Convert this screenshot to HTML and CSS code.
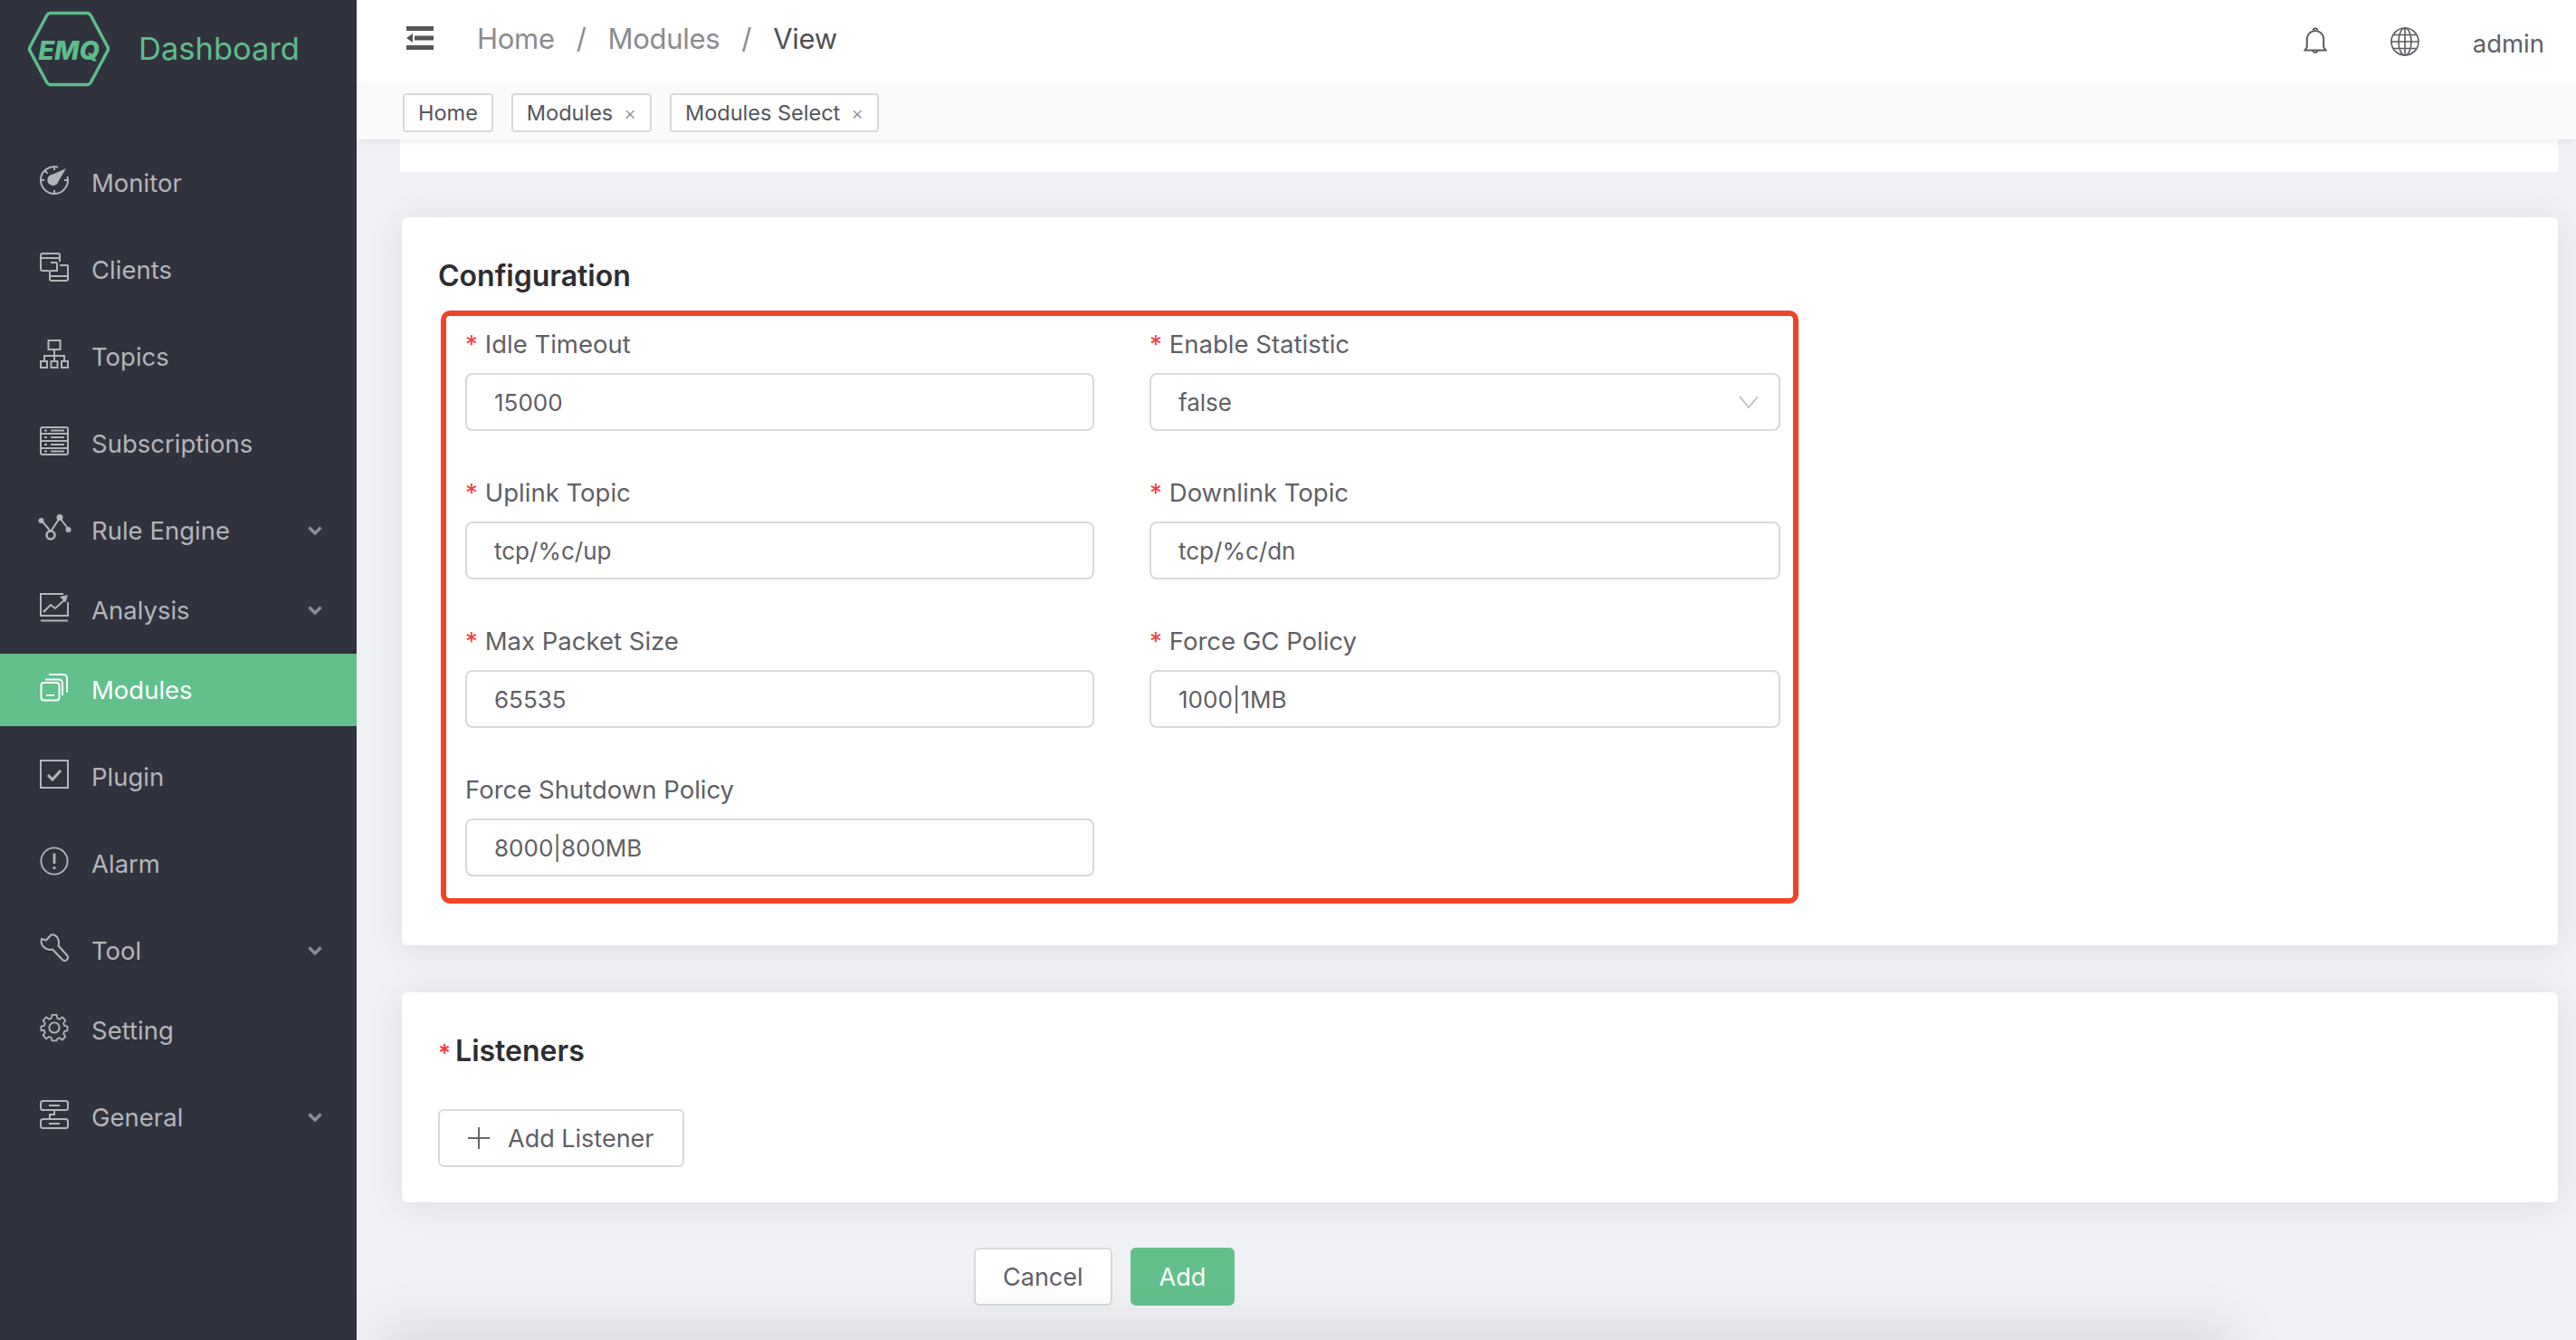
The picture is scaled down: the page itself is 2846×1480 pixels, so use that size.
FILE: index.html
```html
<!DOCTYPE html>
<html lang="en">
<head>
  <meta charset="UTF-8">
  <title>EMQ Dashboard</title>
  <link rel="stylesheet" href="styles.css">
</head>
<body>
  <div class="layout">
    <aside class="sidebar">
      <div class="logo">
        <svg class="logo-mark" viewBox="0 0 92 84">
          <path d="M26 2.500h40a5 5 0 0 1 4.300 2.500l18.400 34.500a5 5 0 0 1 0 5L70.300 79a5 5 0 0 1-4.300 2.500H26a5 5 0 0 1-4.300-2.500L3.300 44.500a5 5 0 0 1 0-5L21.700 5A5 5 0 0 1 26 2.500z" fill="none" stroke="currentColor" stroke-width="3.500"/>
          <text x="46" y="54" text-anchor="middle" class="logo-text">EMQ</text>
        </svg>
        <span class="logo-title">Dashboard</span>
      </div>
      <nav class="menu">
        <a class="menu-item">
          <svg class="menu-icon" viewBox="0 0 32 32"><path d="M20 1.600A15 15 0 1 0 30.400 12"/><path d="M16 1v4M1 16h4M27 16h4M16 27v4M5.500 5.500l3 3"/><path class="solid" d="M29 3l-8.500 14.500a6.200 6.200 0 1 1-6-8z"/></svg>
          <span>Monitor</span>
        </a>
        <a class="menu-item">
          <svg class="menu-icon" viewBox="0 0 32 32"><path d="M10 20H3a2 2 0 0 1-2-2V3a2 2 0 0 1 2-2h17a2 2 0 0 1 2 2v7"/><path d="M1 6h21"/><path d="M12 11h6a1 1 0 0 1 1 1v8h-8"/><path d="M22 14h8a1 1 0 0 1 1 1v14a2 2 0 0 1-2 2H13a2 2 0 0 1-2-2v-9"/><path d="M12 26h19"/></svg>
          <span>Clients</span>
        </a>
        <a class="menu-item">
          <svg class="menu-icon" viewBox="0 0 32 32"><rect x="9.500" y="1" width="13" height="10"/><path d="M16 11v7M5 24v-6h22v6M16 18v6"/><rect x="1" y="24" width="7" height="7"/><rect x="12.500" y="24" width="7" height="7"/><rect x="24" y="24" width="7" height="7"/></svg>
          <span>Topics</span>
        </a>
        <a class="menu-item">
          <svg class="menu-icon" viewBox="0 0 32 32"><rect x="1" y="1" width="30" height="30" rx="2"/><path d="M1 8h30M1 16h30M1 24h30"/><path d="M5 4.500h3M12 4.500h15M5 12h3M12 12h15M5 20h3M12 20h15M5 27.500h3M12 27.500h15"/></svg>
          <span>Subscriptions</span>
        </a>
        <a class="menu-item item-tight">
          <svg class="menu-icon icon-wide" viewBox="0 0 36 32"><path d="M4 8l10 12 10-15 10 13"/><circle class="solid" cx="3.500" cy="8" r="3"/><circle class="solid" cx="24" cy="4.500" r="3.500"/><circle class="solid" cx="33.500" cy="18" r="3"/><circle class="hollow" cx="14" cy="24" r="4.500"/></svg>
          <span>Rule Engine</span>
          <svg class="chevron" viewBox="0 0 16 10"><path d="M1.500 1.500L8 8l6.500-6.500"/></svg>
        </a>
        <a class="menu-item item-tight">
          <svg class="menu-icon" viewBox="0 0 32 32"><path d="M26 1H1v24h30V10"/><path d="M1 30.500h30"/><path d="M5 20l7-7 5 4 12-11"/><path class="solid" d="M31 2l-9 2 6.500 6.500z"/><circle class="solid" cx="5" cy="20" r="1.500"/></svg>
          <span>Analysis</span>
          <svg class="chevron" viewBox="0 0 16 10"><path d="M1.500 1.500L8 8l6.500-6.500"/></svg>
        </a>
        <a class="menu-item active">
          <svg class="menu-icon" viewBox="0 0 32 32"><rect x="1.500" y="11" width="20" height="19.500" rx="3"/><path d="M7 25h9"/><path d="M6 7.500h15a4 4 0 0 1 4 4V25"/><path d="M10 2h16a4 4 0 0 1 4 4v15.500"/></svg>
          <span>Modules</span>
        </a>
        <a class="menu-item">
          <svg class="menu-icon" viewBox="0 0 32 32"><rect x="1" y="1" width="30" height="30"/><path class="thick" d="M9 17l5 5 9-10"/></svg>
          <span>Plugin</span>
        </a>
        <a class="menu-item">
          <svg class="menu-icon" viewBox="0 0 34 34"><circle cx="17" cy="17" r="15.500"/><path class="thick" d="M17 8v12"/><circle class="solid" cx="17" cy="25" r="1.700"/></svg>
          <span>Alarm</span>
        </a>
        <a class="menu-item item-tight">
          <svg class="menu-icon" viewBox="0 0 32 32"><path d="M12.500 1.500L7 7.500 2 6C0 13 7 20 14 17.500L25 29a3.500 3.500 0 0 0 5-5L20.500 13.500C22.500 7 18 0 12.500 1.500z" stroke-linejoin="round"/></svg>
          <span>Tool</span>
          <svg class="chevron" viewBox="0 0 16 10"><path d="M1.500 1.500L8 8l6.500-6.500"/></svg>
        </a>
        <a class="menu-item">
          <svg class="menu-icon" viewBox="0 0 34 34"><path d="M14 2h6l.8 4.300 2.900 1.200 3.700-2.500 4 4-2.500 3.700 1.200 2.900L34 16.400v5.200l-3.900.8-1.200 2.900 2.500 3.700-4 4-3.700-2.500-2.900 1.200L20 34h-6l-.8-3.700-2.900-1.200-3.700 2.500-4-4 2.500-3.700-1.200-2.900L0 21.600v-5.200l3.900-.8 1.200-2.900L2.600 9l4-4 3.700 2.500 2.900-1.200z" transform="translate(1.500 0) scale(.91 .95)"/><circle cx="17" cy="17" r="6"/></svg>
          <span>Setting</span>
        </a>
        <a class="menu-item item-tight">
          <svg class="menu-icon" viewBox="0 0 32 32"><rect x="1" y="1" width="30" height="10" rx="2.500"/><rect x="1" y="21" width="30" height="10" rx="2.500"/><path d="M16 11v5h-5v5M10 6h12M10 26h12"/></svg>
          <span>General</span>
          <svg class="chevron" viewBox="0 0 16 10"><path d="M1.500 1.500L8 8l6.500-6.500"/></svg>
        </a>
      </nav>
    </aside>

    <div class="main">
      <header class="topbar">
        <svg class="fold-icon" viewBox="0 0 30 26"><path d="M0 0h30v5H0zM0 21h30v5H0zM9 10.500h21v5H9zM7 8v10l-7-5z"/></svg>
        <div class="breadcrumb">
          <span>Home</span><i>/</i><span>Modules</span><i>/</i><span class="current">View</span>
        </div>
        <div class="topbar-right">
          <svg class="bell" viewBox="0 0 26 32"><path d="M1.500 26.500l2.300-3.500V13a9.300 9.300 0 0 1 18.400 0v10l2.300 3.500z"/><path d="M10.500 4.200a2.600 2.600 0 0 1 5 0M10.200 27a3 3 0 0 0 5.600 0"/></svg>
          <svg class="globe" viewBox="0 0 32 32"><circle cx="16" cy="16" r="15"/><ellipse cx="16" cy="16" rx="7" ry="15"/><path d="M16 1v30M1 16h30M3.500 8.500h25M3.500 23.500h25"/></svg>
          <span class="user">admin</span>
        </div>
      </header>
      <div class="tags">
        <span class="tag">Home</span>
        <span class="tag">Modules<b>×</b></span>
        <span class="tag">Modules Select<b>×</b></span>
      </div>

      <div class="content">
        <div class="card card-cut"></div>

        <section class="card card-config">
          <h2>Configuration</h2>
          <form class="config-form">
            <div class="field">
              <label class="required">Idle Timeout</label>
              <input type="text" value="15000">
            </div>
            <div class="field">
              <label class="required">Enable Statistic</label>
              <div class="select">
                <input type="text" value="false">
                <svg viewBox="0 0 22 14"><path d="M1 1l10 12L21 1"/></svg>
              </div>
            </div>
            <div class="field">
              <label class="required">Uplink Topic</label>
              <input type="text" value="tcp/%c/up">
            </div>
            <div class="field">
              <label class="required">Downlink Topic</label>
              <input type="text" value="tcp/%c/dn">
            </div>
            <div class="field">
              <label class="required">Max Packet Size</label>
              <input type="text" value="65535">
            </div>
            <div class="field">
              <label class="required">Force GC Policy</label>
              <input type="text" value="1000|1MB">
            </div>
            <div class="field">
              <label>Force Shutdown Policy</label>
              <input type="text" value="8000|800MB">
            </div>
          </form>
        </section>

        <section class="card card-listeners">
          <h2 class="required">Listeners</h2>
          <button class="btn btn-add" type="button">
            <svg viewBox="0 0 24 24"><path d="M12 0v24M0 12h24"/></svg>
            Add Listener
          </button>
        </section>

        <div class="actions">
          <button class="btn" type="button">Cancel</button>
          <button class="btn btn-primary" type="button">Add</button>
        </div>
      </div>
    </div>
  </div>
</body>
</html>
```

FILE: styles.css
```css
* {
  margin: 0;
  padding: 0;
  box-sizing: border-box;
}

body {
  font-family: Inter, "Noto Sans", sans-serif;
  background: #eff1f5;
  color: #5f6066;
  height: 1480px;
  overflow: hidden;
}

.layout {
  display: flex;
  height: 1480px;
}

/* sidebar */
.sidebar {
  width: 394px;
  flex-shrink: 0;
  background: #30323e;
  color: #b4b5ba;
}

.logo {
  display: flex;
  align-items: center;
  height: 108px;
  padding-left: 30px;
  color: #5dbd8a;
}

.logo-mark {
  width: 92px;
  height: 84px;
}

.logo-text {
  font-family: Inter, sans-serif;
  font-size: 29px;
  font-weight: 800;
  font-style: italic;
  fill: currentColor;
}

.logo-title {
  margin: -2px 0 0 31px;
  font-size: 34.5px;
}

.menu {
  padding-top: 54px;
}

.menu-item {
  display: flex;
  align-items: center;
  height: 80px;
  margin-bottom: 16px;
  padding: 0 38px 0 44px;
  font-size: 27.5px;
}

.menu-item.item-tight {
  margin-bottom: 8px;
}

.menu-item.active {
  background: #61c08c;
  color: #fff;
}

.menu-item span {
  flex: 1;
}

.menu-icon {
  width: 32px;
  height: 32px;
  margin-right: 25px;
  margin-top: -6px;
  overflow: visible;
  fill: none;
  stroke: currentColor;
  stroke-width: 2;
}

.icon-wide {
  width: 36px;
  margin-left: -2px;
  margin-right: 23px;
}

.menu-icon .solid {
  fill: currentColor;
  stroke: none;
}

.menu-icon .hollow {
  fill: #30323e;
  stroke-width: 2.500;
}

.menu-icon .thick {
  stroke-width: 3;
}

.chevron {
  width: 16px;
  height: 10px;
  fill: none;
  stroke: #8b8c93;
  stroke-width: 3.500;
}

/* top */
.main {
  flex: 1;
  min-width: 0;
  display: flex;
  flex-direction: column;
  position: relative;
  overflow: hidden;
}

/* shadow of the footer sitting just below the window */
.main::after {
  content: '';
  position: absolute;
  left: 40px;
  bottom: -20px;
  width: 2020px;
  height: 20px;
  box-shadow: 0 0 60px 14px rgba(0, 0, 0, 0.1);
  pointer-events: none;
}

.topbar {
  display: flex;
  align-items: center;
  height: 92px;
  flex-shrink: 0;
  padding: 0 35px 8px 55px;
  background: #fff;
}

.fold-icon {
  width: 30px;
  height: 26px;
  fill: #555;
  margin-right: 48px;
}

.breadcrumb {
  display: flex;
  align-items: center;
  font-size: 31px;
  letter-spacing: -0.3px;
  color: #8b8b8f;
}

.breadcrumb i {
  font-style: normal;
  margin: 0 24px;
}

.breadcrumb .current {
  color: #4f4f55;
}

.topbar-right {
  margin-left: auto;
  display: flex;
  align-items: center;
}

.bell,
.globe {
  fill: none;
  stroke: #5b5b60;
  stroke-width: 2;
}

.bell {
  width: 26px;
  height: 32px;
  margin: 6px 70px 0 0;
}

.globe {
  width: 32px;
  height: 32px;
  stroke-width: 1.600;
  margin: 8px 59px 0 0;
}

.user {
  margin-top: 12px;
  font-size: 27.5px;
  color: #5f6066;
}

.tags {
  display: flex;
  align-items: center;
  gap: 20px;
  height: 62px;
  flex-shrink: 0;
  padding: 2px 51px 0;
  background: #fafafa;
  box-shadow: 0 2px 8px rgba(0, 0, 0, 0.07);
  position: relative;
  z-index: 1;
}

.tag {
  display: flex;
  align-items: center;
  height: 43px;
  padding: 0 15px;
  background: #fff;
  border: 2px solid #d8d8da;
  border-radius: 4px;
  font-size: 23.5px;
  color: #55555b;
  white-space: nowrap;
}

.tag b {
  font-weight: 300;
  font-size: 21px;
  color: #8a8a8f;
  margin-left: 12px;
}

/* content */
.content {
  flex: 1;
  min-height: 0;
  padding: 0 20px 0 50px;
}

.card {
  background: #fff;
  border-radius: 6px;
  box-shadow: 0 3px 40px rgba(0, 0, 0, 0.09);
}

.card-cut {
  height: 36px;
  margin-left: -2px;
  border-radius: 0;
  box-shadow: none;
}

.card-config {
  margin-top: 50px;
  height: 804px;
  padding: 44px 40px 0;
}

.card h2 {
  font-size: 32px;
  line-height: 42px;
  font-weight: 600;
  color: #2d2d30;
}

.config-form {
  display: grid;
  grid-template-columns: 695px 697px;
  column-gap: 61px;
  row-gap: 48px;
  align-content: start;
  width: 1500px;
  height: 655px;
  margin: 17px 0 0 3px;
  padding: 11px 0 0 21px;
  border: 6px solid #ef4427;
  border-radius: 10px;
}

.field label {
  display: block;
  font-size: 27.5px;
  line-height: 40px;
  margin-bottom: 12px;
}

.required::before {
  content: '*';
  color: #f23d3d;
  margin-right: 8px;
}

.field input {
  display: block;
  width: 100%;
  height: 64px;
  padding: 0 30px;
  border: 2px solid #d9d9db;
  border-radius: 8px;
  outline: none;
  background: #fff;
  font-family: inherit;
  font-size: 26px;
  color: #5f6066;
}

.select {
  position: relative;
}

.select svg {
  position: absolute;
  right: 24px;
  top: 25px;
  width: 22px;
  height: 14px;
  fill: none;
  stroke: #b9b9bd;
  stroke-width: 1.600;
}

.card-listeners {
  margin-top: 52px;
  height: 232px;
  padding: 44px 40px 0;
}

.card-listeners h2::before {
  font-size: 26px;
  margin-right: 5px;
}

.btn {
  display: inline-flex;
  align-items: center;
  justify-content: center;
  height: 64px;
  padding: 0 30px;
  background: #fff;
  border: 2px solid #d9d9db;
  border-radius: 6px;
  font-family: inherit;
  font-size: 27px;
  color: #5f6066;
}

.btn-add {
  margin-top: 41px;
  gap: 20px;
  padding: 0 31px;
}

.btn-add svg {
  width: 24px;
  height: 24px;
  fill: none;
  stroke: #66666b;
  stroke-width: 2;
}

.actions {
  display: flex;
  gap: 20px;
  margin-top: 50px;
  padding-left: 632px;
}

.btn-primary {
  padding: 0 30px;
  background: #61c08c;
  border-color: #61c08c;
  color: #fff;
}
```
